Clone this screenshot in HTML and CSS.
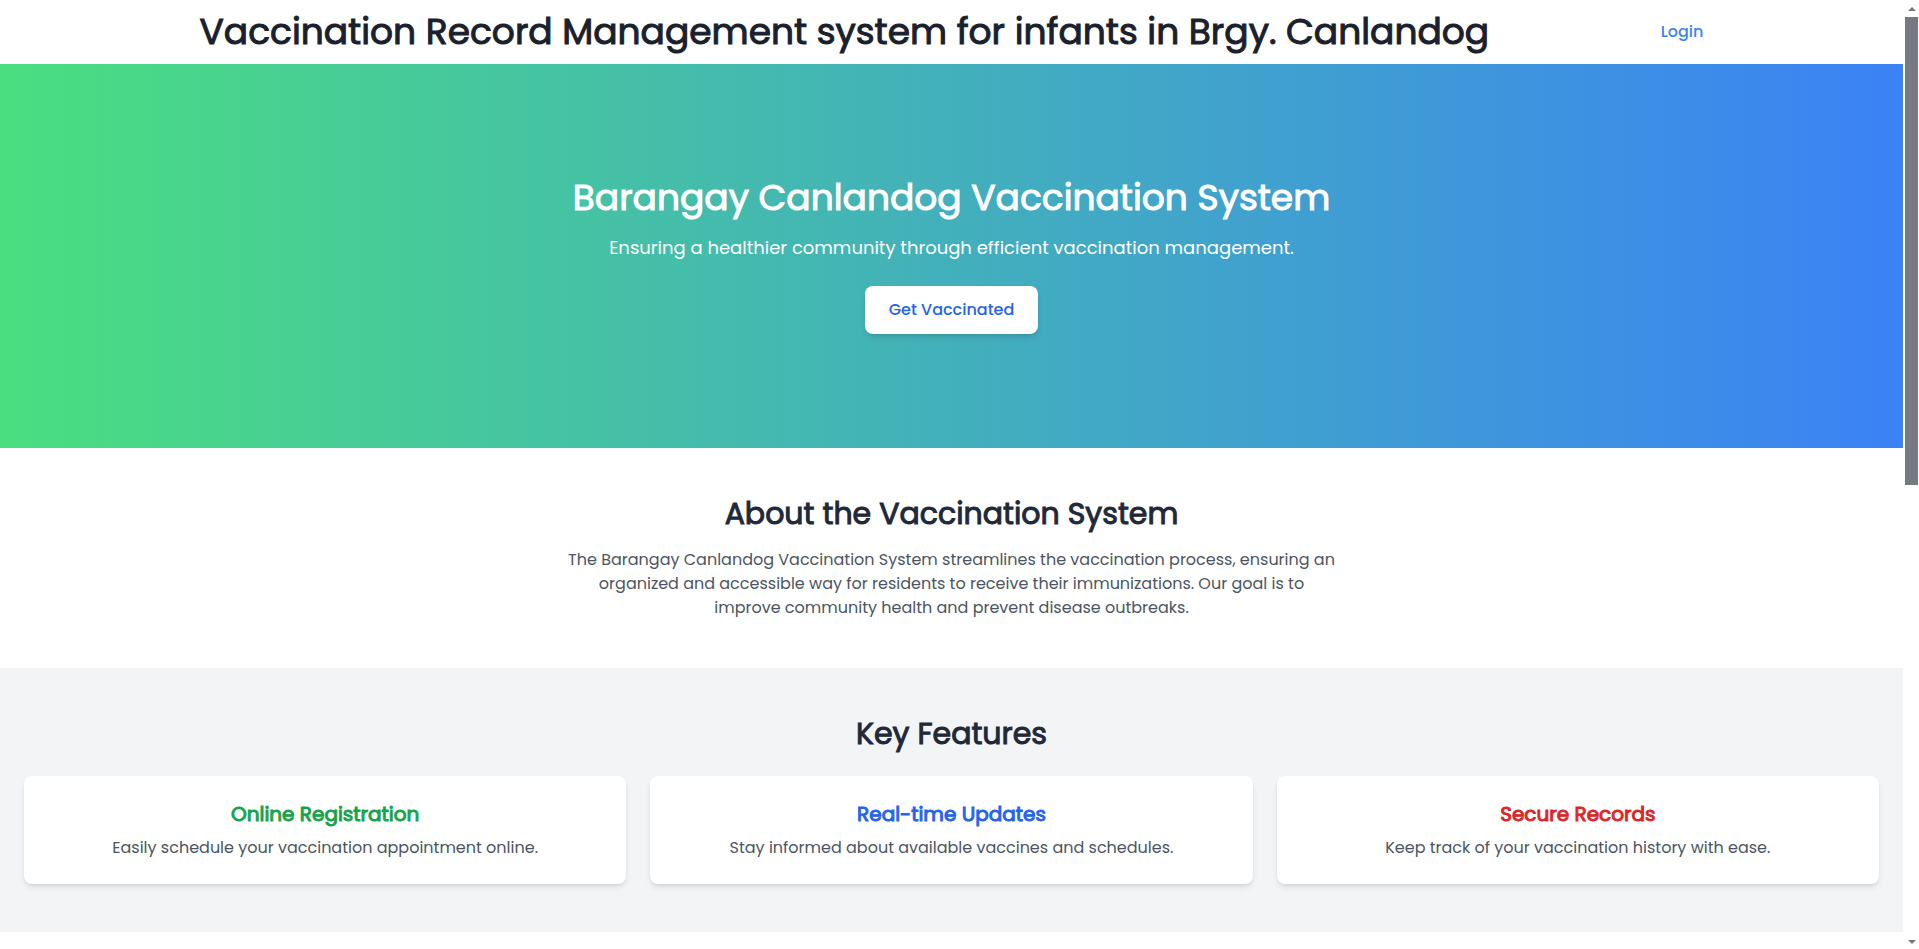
FILE: index.html
```html
<!DOCTYPE html>
<html lang="en">
<head>
  <meta charset="utf-8">
  <meta name="viewport" content="width=device-width, initial-scale=1">
  <title>Barangay Canlandog Vaccination System</title>
  <link rel="stylesheet" href="styles.css">
</head>
<body>
  <div class="page">
    <header class="topbar">
      <h1 class="brand strong">Vaccination Record Management system for infants in Brgy. Canlandog</h1>
      <nav><a class="login" href="#login">Login</a></nav>
    </header>
    <main>
      <section class="hero">
        <h2 class="hero-title strong">Barangay Canlandog Vaccination System</h2>
        <p class="hero-text">Ensuring a healthier community through efficient vaccination management.</p>
        <button class="cta" type="button">Get Vaccinated</button>
      </section>
      <section class="about">
        <h2 class="section-title strong">About the Vaccination System</h2>
        <p class="about-text">The Barangay Canlandog Vaccination System streamlines the vaccination process, ensuring an organized and accessible way for residents to receive their immunizations. Our goal is to improve community health and prevent disease outbreaks.</p>
      </section>
      <section class="features">
        <h2 class="section-title strong">Key Features</h2>
        <div class="cards">
          <article class="card">
            <h3 class="card-title strong green">Online Registration</h3>
            <p>Easily schedule your vaccination appointment online.</p>
          </article>
          <article class="card">
            <h3 class="card-title strong blue">Real-time Updates</h3>
            <p>Stay informed about available vaccines and schedules.</p>
          </article>
          <article class="card">
            <h3 class="card-title strong red">Secure Records</h3>
            <p>Keep track of your vaccination history with ease.</p>
          </article>
        </div>
      </section>
    </main>
  </div>
  <div class="scrollbar" aria-hidden="true">
    <svg class="arrow" viewBox="0 0 8 4"><path d="M4 0L8 4H0z"/></svg>
    <div class="track"><div class="thumb"></div></div>
    <svg class="arrow" viewBox="0 0 8 4"><path d="M0 0H8L4 4z"/></svg>
  </div>
</body>
</html>
```
FILE: styles.css
```css
* {
  box-sizing: border-box;
  margin: 0;
}

body {
  display: flex;
  height: 100vh;
  overflow: hidden;
  background: #fff;
  color: #4b5563;
  font-family: Poppins, Inter, sans-serif;
  font-size: 16px;
  line-height: 24px;
}

.page {
  flex: 1;
  min-width: 0;
}

/* Regular face thickened by an outline in the text colour */
.strong {
  font-weight: 400;
  -webkit-text-stroke: 1px currentColor;
}

.topbar {
  display: flex;
  align-items: center;
  justify-content: space-evenly;
  padding: 12px 28px;
}

.brand {
  color: #1a202c;
  font-size: 36px;
  line-height: 40px;
}

.login {
  color: #3b82f6;
  font-weight: 500;
  text-decoration: none;
}

.hero {
  display: flex;
  flex-direction: column;
  align-items: center;
  justify-content: center;
  min-height: 384px;
  background: linear-gradient(to right, #4ade80, #3b82f6);
  color: #fff;
  text-align: center;
}

.hero-title {
  font-size: 36px;
  line-height: 40px;
}

.hero-text {
  margin-top: 16px;
  font-size: 18px;
  line-height: 28px;
}

.cta {
  margin-top: 24px;
  padding: 12px 24px;
  border: 0;
  border-radius: 8px;
  background: #fff;
  box-shadow: 0 4px 6px -1px rgb(0 0 0 / 0.1), 0 2px 4px -2px rgb(0 0 0 / 0.1);
  color: #2563eb;
  font: inherit;
  font-weight: 500;
}

.about,
.features {
  padding: 48px 24px;
  text-align: center;
}

.section-title {
  color: #1f2937;
  font-size: 30px;
  line-height: 36px;
}

.about-text {
  max-width: 768px;
  margin: 16px auto 0;
}

.features {
  background: #f3f4f6;
}

.cards {
  display: grid;
  grid-template-columns: repeat(3, 1fr);
  gap: 24px;
  margin-top: 24px;
}

.card {
  padding: 24px;
  border-radius: 8px;
  background: #fff;
  box-shadow: 0 4px 6px -1px rgb(0 0 0 / 0.1), 0 2px 4px -2px rgb(0 0 0 / 0.1);
}

.card-title {
  margin-bottom: 8px;
  font-size: 20px;
  line-height: 28px;
}

.green { color: #16a34a; }
.blue { color: #2563eb; }
.red { color: #dc2626; }

.scrollbar {
  display: flex;
  flex-direction: column;
  align-items: center;
  gap: 6px;
  width: 16px;
  padding: 7px 1px 5px 2px;
}

.arrow {
  width: 8px;
  height: 4px;
  fill: #767982;
}

.track {
  flex: 1;
  width: 100%;
}

.thumb {
  height: 51%;
  background: #767982;
}
```
